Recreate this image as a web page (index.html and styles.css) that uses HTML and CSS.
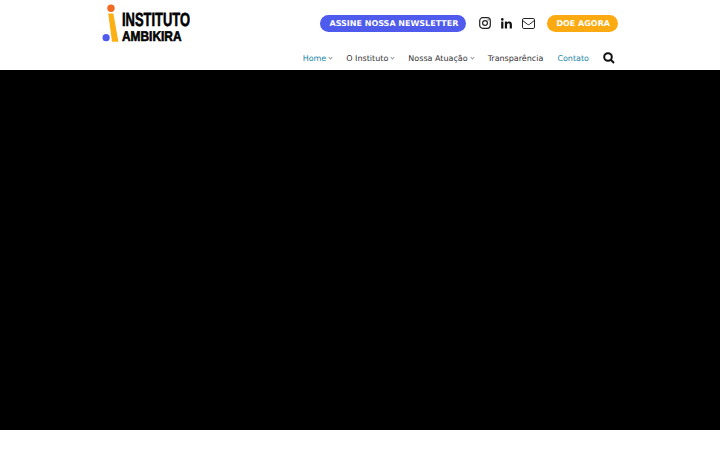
FILE: index.html
```html
<!DOCTYPE html>
<html lang="pt-BR">
<head>
    <meta charset="UTF-8">
    <title>Instituto Ambikira</title>
    <link rel="stylesheet" href="styles.css">
</head>
<body>

<header class="site-header">
    <a class="logo" href="#">
        <svg class="logo-mark" width="18" height="40" viewBox="0 0 18 40">
            <circle cx="9" cy="4.2" r="3.7" fill="#f26a21"/>
            <polygon points="6.2,9.5 11.4,9.5 16.4,37.8 10,37.8" fill="#fbb116"/>
            <circle cx="4.1" cy="33.7" r="3.6" fill="#4f5bed"/>
        </svg>
        <span class="logo-text">
            <span class="logo-line1">INSTITUTO</span>
            <span class="logo-line2">AMBIKIRA</span>
        </span>
    </a>

    <div class="header-right">
        <div class="top-row">
            <a class="pill pill-blue" href="#">ASSINE NOSSA NEWSLETTER</a>
            <div class="social">
                <a href="#" aria-label="Instagram">
                    <svg width="12" height="12" viewBox="0 0 12 12" fill="none" stroke="#222" stroke-width="1.2">
                        <rect x="0.7" y="0.7" width="10.6" height="10.6" rx="3"/>
                        <circle cx="6" cy="6" r="2.4"/>
                        <circle cx="9.1" cy="2.9" r="0.6" fill="#222" stroke="none"/>
                    </svg>
                </a>
                <a href="#" aria-label="LinkedIn">
                    <svg width="11" height="11" viewBox="0 0 12 12" fill="#111">
                        <circle cx="1.4" cy="1.5" r="1.4"/>
                        <rect x="0.2" y="3.9" width="2.4" height="7.6"/>
                        <path d="M4.2 3.9h2.3v1.1c.4-.7 1.3-1.3 2.5-1.3 2.4 0 2.9 1.6 2.9 3.6v4.2H9.5V7.8c0-.9 0-2-1.2-2s-1.7 1-1.7 1.9v3.8H4.2z"/>
                    </svg>
                </a>
                <a href="#" aria-label="E-mail">
                    <svg width="13" height="11" viewBox="0 0 13 11" fill="none" stroke="#222" stroke-width="1">
                        <rect x="0.5" y="0.5" width="12" height="10" rx="1.3"/>
                        <path d="M0.8 2.6 L5.4 6.3 Q6.5 7.1 7.6 6.3 L12.2 2.6"/>
                    </svg>
                </a>
            </div>
            <a class="pill pill-orange" href="#">DOE AGORA</a>
        </div>
        <nav class="main-nav">
            <a class="active" href="#">Home<span class="caret"></span></a>
            <a href="#">O Instituto<span class="caret"></span></a>
            <a href="#">Nossa Atuação<span class="caret"></span></a>
            <a href="#">Transparência</a>
            <a class="active" href="#">Contato</a>
            <a class="search" href="#" aria-label="Buscar">
                <svg width="12" height="12" viewBox="0 0 12 12" fill="none" stroke="#111" stroke-width="2">
                    <circle cx="5" cy="5" r="3.8"/>
                    <path d="M7.8 7.8 L11 11"/>
                </svg>
            </a>
        </nav>
    </div>
</header>

<section class="hero"></section>

</body>
</html>
```

FILE: styles.css
```css
body {
    font-family: "DejaVu Sans", sans-serif;
    background-color: #fff;
    margin: 0;
    padding: 0;
    text-rendering: geometricPrecision;
}
a {
    text-decoration: none;
}
.site-header {
    display: flex;
    justify-content: space-between;
    height: 70px;
    padding: 0 102px;
    box-sizing: border-box;
}
.logo {
    display: flex;
    align-items: flex-start;
    gap: 2px;
    padding-top: 4px;
}
.logo-text {
    display: flex;
    flex-direction: column;
    padding-top: 8px;
    font-family: "Liberation Sans", sans-serif;
    font-weight: bold;
    color: #000;
    -webkit-text-stroke: 0.6px #000;
}
.logo-line1 {
    font-size: 19px;
    line-height: 18px;
    transform: scaleX(0.68);
    transform-origin: left;
    width: 68px;
    white-space: nowrap;
}
.logo-line2 {
    font-size: 14px;
    line-height: 12px;
    transform: scaleX(0.85);
    transform-origin: left;
    width: 60px;
    white-space: nowrap;
}
.header-right {
    display: flex;
    flex-direction: column;
    align-items: flex-end;
}
.top-row {
    display: flex;
    align-items: center;
    margin-top: 14px;
    height: 18px;
}
.pill {
    color: #fff;
    font-size: 8px;
    font-weight: bold;
    line-height: 17px;
    border-radius: 9px;
    white-space: nowrap;
}
.pill-blue {
    background-color: #4f5bed;
    padding: 0 8px 0 9px;
}
.pill-orange {
    background-color: #fbab11;
    padding: 0 8px 0 9px;
}
.social {
    display: flex;
    align-items: center;
    gap: 10px;
    margin: 0 12px 0 13px;
}
.social a {
    display: flex;
}
.main-nav {
    display: flex;
    align-items: center;
    margin-top: 17px;
    height: 18px;
    font-size: 8px;
}
.main-nav a {
    color: #333;
    margin-left: 14px;
    display: flex;
    align-items: center;
}
.main-nav a.active {
    color: #2487a8;
}
.caret {
    width: 2px;
    height: 2px;
    margin: -1px 0 0 3px;
    border-right: 1px solid #999;
    border-bottom: 1px solid #999;
    transform: rotate(45deg);
}
.main-nav a.search {
    margin-left: 14px;
    margin-right: 3px;
}
.hero {
    height: 360px;
    background-color: #000;
}
```
